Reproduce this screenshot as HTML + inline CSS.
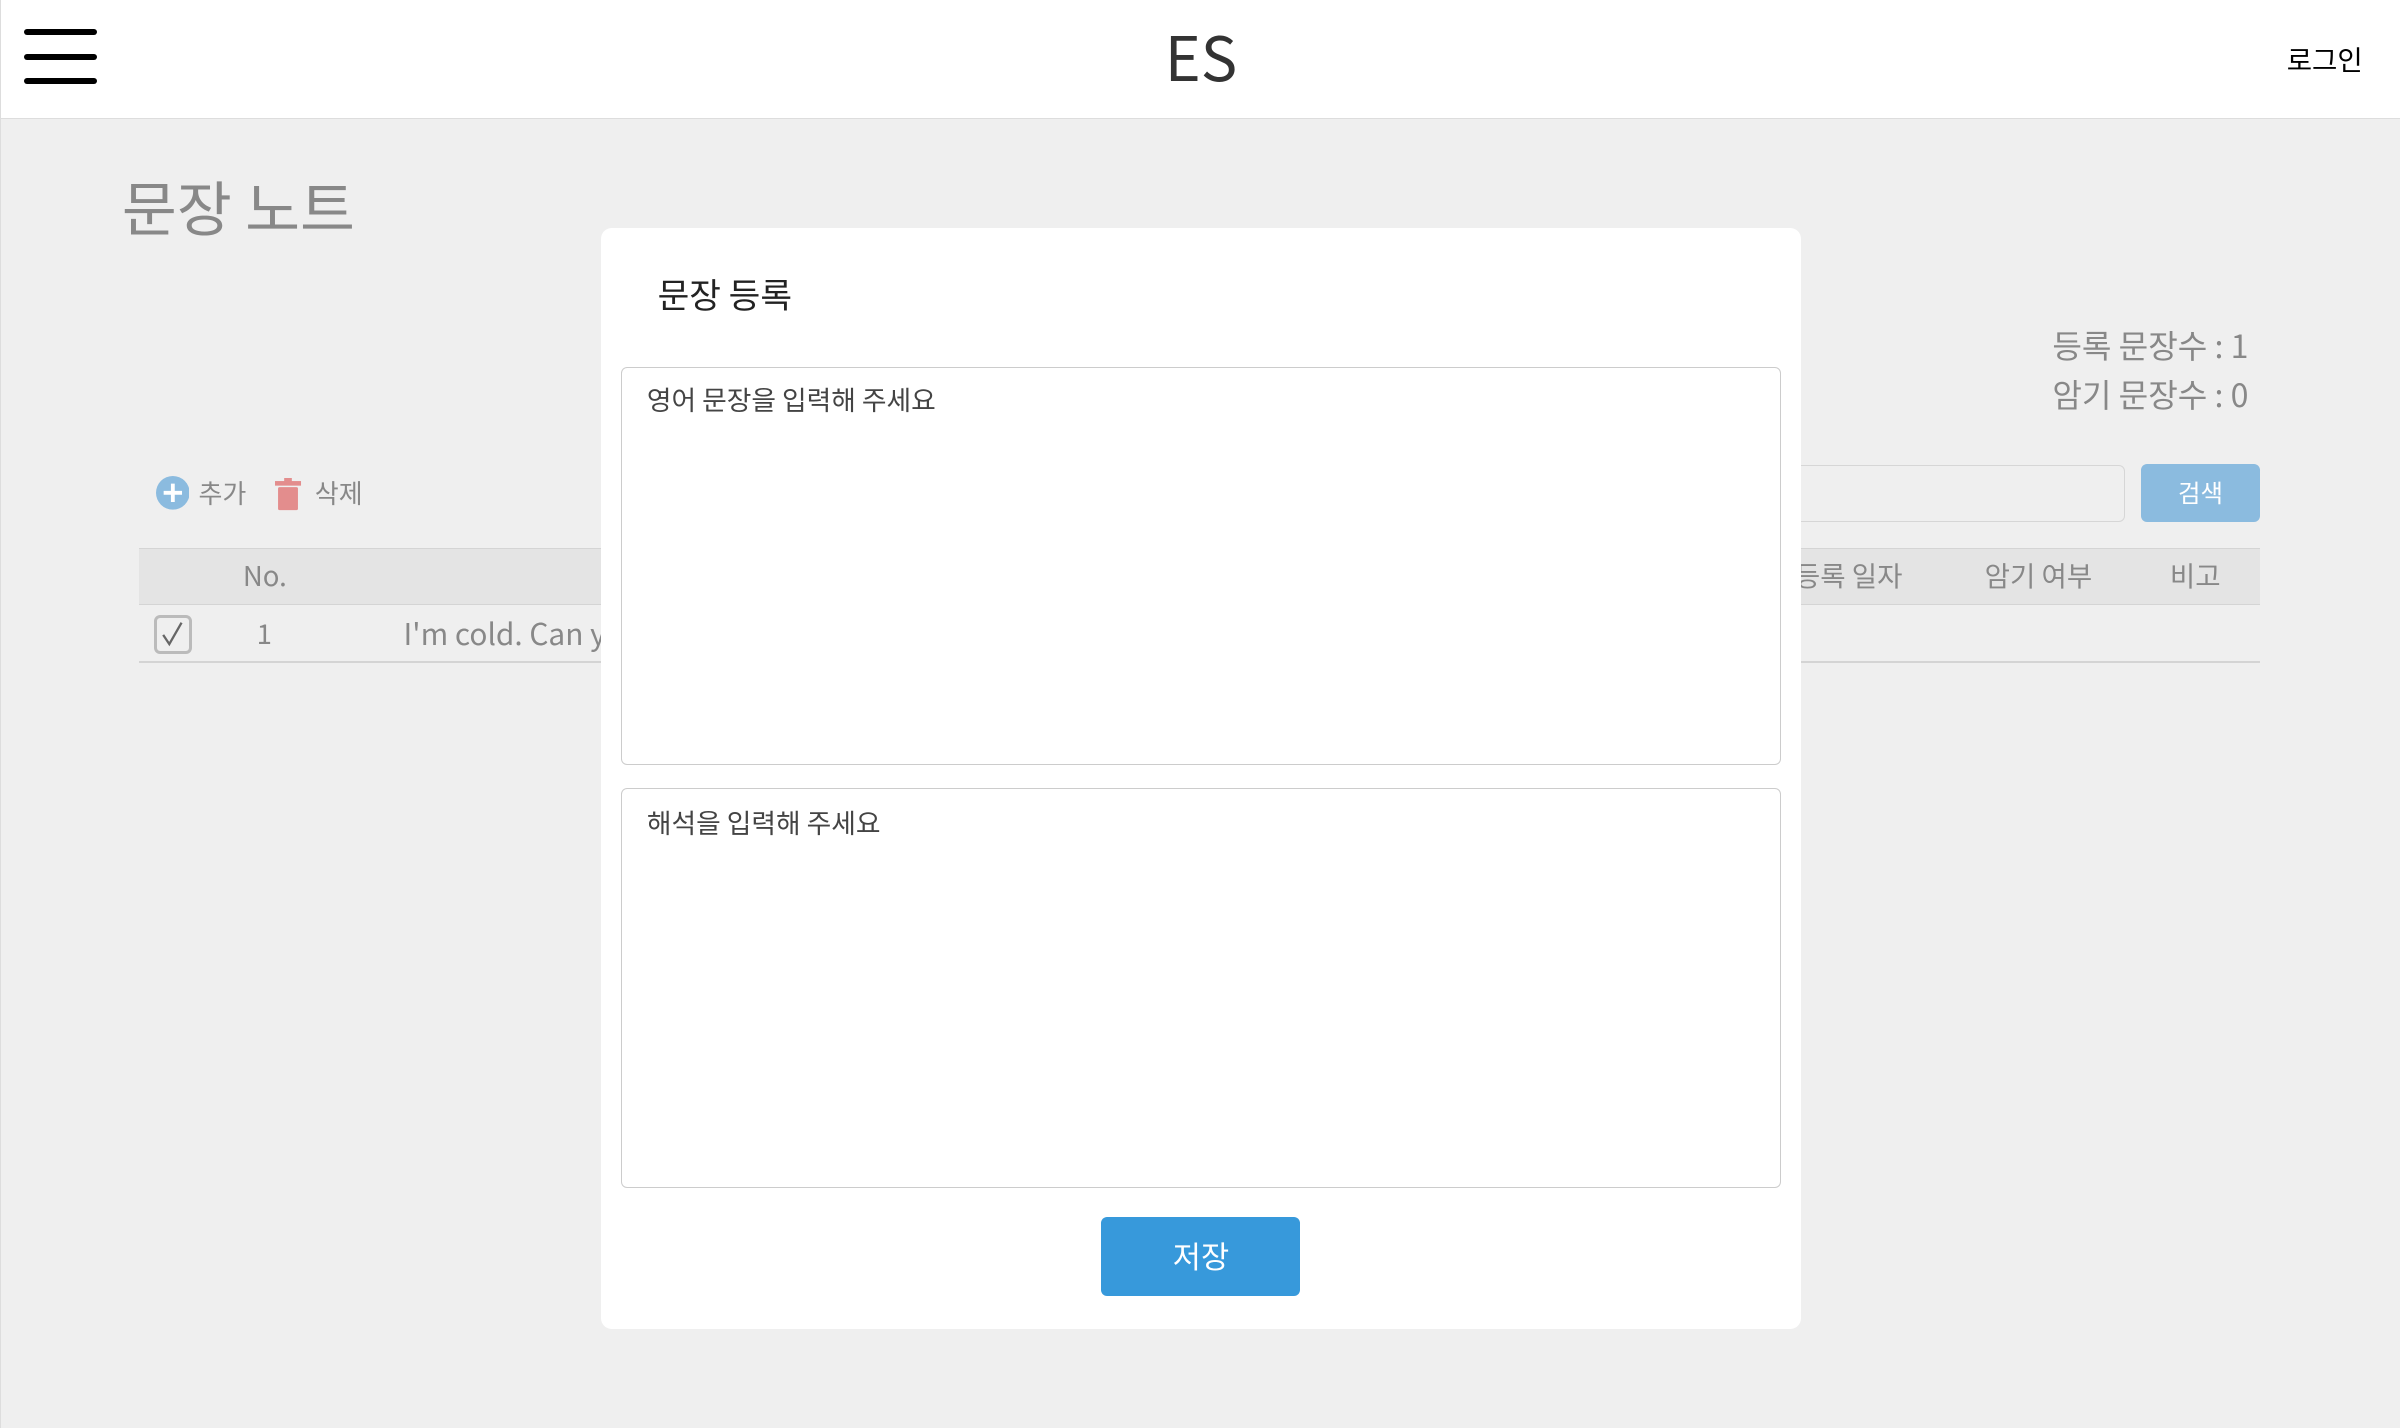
<!DOCTYPE html>
<html><head><meta charset="utf-8"><style>
html,body{margin:0;padding:0;}
body{width:2400px;height:1428px;overflow:hidden;background:#efefef;}
#w{zoom:1.530612;width:1568px;height:933px;position:relative;font-family:"Noto Sans CJK KR","Liberation Sans",sans-serif;background:#efefef;border-left:1px solid #ddd;box-sizing:border-box;}
.a{position:absolute;white-space:nowrap;}
.hdr{left:0;top:0;width:1568px;height:77px;background:#fff;border-bottom:1px solid #ddd;}
.bar{position:absolute;left:15px;width:48px;height:4px;border-radius:2px;background:#000;}
.g{color:#888;}
</style></head><body><div id="w">
<div class="a hdr">
 <div class="bar" style="top:19px"></div><div class="bar" style="top:35px"></div><div class="bar" style="top:51px"></div>
 <div class="a" style="left:0;width:1568px;text-align:center;top:12px;font-size:40px;color:#333;line-height:48px">ES</div>
 <div class="a" style="right:25px;top:26px;font-size:18px;color:#000;line-height:24px">로그인</div>
</div>
<div class="a g" style="left:79px;top:112px;font-size:39px;line-height:46px">문장 노트</div>
<div class="a g" style="right:99px;top:212px;font-size:21px;line-height:28px;text-align:right">등록 문장수 : 1<br><span style="line-height:36px">암기 문장수 : 0</span></div>
<div class="a" style="left:1100px;top:304px;width:288px;height:37px;border:1px solid #d6d6d6;border-radius:4px;box-sizing:border-box"></div>
<div class="a" style="left:1398px;top:303px;width:78px;height:38px;background:#8bbbdf;border-radius:4px;color:#fff;font-size:16px;line-height:38px;text-align:center">검색</div>
<svg class="a" style="left:101px;top:311px" width="22" height="22"><circle cx="11" cy="11" r="11" fill="#8bbbdf"/><path d="M11 5v12M5 11h12" stroke="#fff" stroke-width="2.5"/></svg>
<div class="a g" style="left:129px;top:311px;font-size:17px;line-height:22px">추가</div>
<svg class="a" style="left:179px;top:312px" width="18" height="22"><rect x="0" y="2" width="17" height="3" fill="#e38d8d"/><rect x="6" y="0" width="5" height="3" fill="#e38d8d"/><rect x="2" y="6" width="13" height="15" rx="1" fill="#e38d8d"/></svg>
<div class="a g" style="left:205px;top:311px;font-size:17px;line-height:22px">삭제</div>
<div class="a" style="left:90px;top:358px;width:1386px;height:37px;background:#e4e4e4;border-top:1px solid #d4d4d4;border-bottom:1px solid #d4d4d4;box-sizing:border-box"></div>
<div class="a" style="left:90px;top:432px;width:1386px;height:1px;background:#d4d4d4"></div>
<div class="a g" style="left:158px;top:363px;font-size:18px;line-height:24px">No.</div>
<div class="a g" style="left:1172px;top:363px;font-size:18px;line-height:24px">등록 일자</div>
<div class="a g" style="left:1296px;top:363px;font-size:18px;line-height:24px">암기 여부</div>
<div class="a g" style="left:1417px;top:363px;font-size:18px;line-height:24px">비고</div>
<div class="a" style="left:100px;top:402px;width:25px;height:25px;border:2px solid #bbb;border-radius:4px;box-sizing:border-box"></div>
<svg class="a" style="left:100px;top:402px" width="25" height="25"><path d="M6 13l4 6 8-14" stroke="#666" stroke-width="1.5" fill="none"/></svg>
<div class="a g" style="left:167px;top:401px;font-size:18px;line-height:24px">1</div>
<div class="a g" style="left:263px;top:401px;font-size:19.5px;line-height:24px">I'm cold. Can you</div>
<div class="a" style="left:392px;top:149px;width:784px;height:719px;background:#fff;border-radius:7px;overflow:hidden">
 <div class="a" style="left:37px;top:29px;font-size:22.5px;line-height:28px;color:#222">문장 등록</div>
 <div class="a" style="left:13px;top:91px;width:758px;height:260px;border:1px solid #ccc;border-radius:4px;box-sizing:border-box"></div>
 <div class="a" style="left:30px;top:100px;font-size:17.5px;line-height:24px;color:#444">영어 문장을 입력해 주세요</div>
 <div class="a" style="left:13px;top:366px;width:758px;height:261px;border:1px solid #ccc;border-radius:4px;box-sizing:border-box"></div>
 <div class="a" style="left:30px;top:376px;font-size:17.5px;line-height:24px;color:#444">해석을 입력해 주세요</div>
 <div class="a" style="left:327px;top:646px;width:130px;height:52px;background:#3799db;border-radius:4px;color:#fff;font-size:20px;line-height:50px;text-align:center">저장</div>
</div>
</div></body></html>
